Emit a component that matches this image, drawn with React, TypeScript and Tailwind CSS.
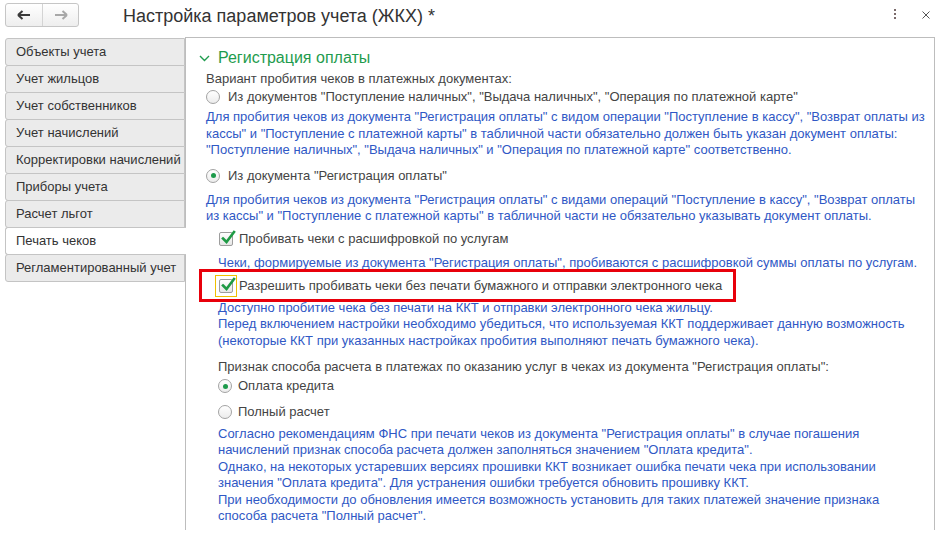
import React from 'react';

const tabs = [
  'Объекты учета',
  'Учет жильцов',
  'Учет собственников',
  'Учет начислений',
  'Корректировки начислений',
  'Приборы учета',
  'Расчет льгот',
  'Печать чеков',
  'Регламентированный учет',
];

const Radio: React.FC<{ checked?: boolean }> = ({ checked }) => (
  <span className="w-[14px] h-[14px] rounded-full border border-[#a3a3a3] bg-gradient-to-b from-white to-[#ececec] flex items-center justify-center shrink-0">
    {checked && <span className="w-[5px] h-[5px] rounded-full bg-[#1c9a4a]" />}
  </span>
);

const Check: React.FC<{ focused?: boolean }> = ({ focused }) => (
  <span
    className={
      focused
        ? 'w-[22px] h-[22px] border border-[#f0c000] flex items-center justify-center shrink-0 -ml-[4px] -mr-[4px]'
        : 'w-[14px] h-[14px] flex items-center justify-center shrink-0'
    }
  >
    <span className="relative w-[14px] h-[14px] border border-[#9d9d9d] rounded-[2px] bg-gradient-to-b from-white to-[#e6e6e6]">
      <svg className="absolute left-[1px] -top-[3px]" width="15" height="15" viewBox="0 0 15 15">
        <path d="M2 8.5 L5.5 12 L13 2" fill="none" stroke="#1f9a45" strokeWidth="2.6" strokeLinecap="square" />
      </svg>
    </span>
  </span>
);

const Blue: React.FC<{ lines: string[]; className?: string }> = ({ lines, className }) => (
  <div className={`text-[#2f58c5] whitespace-nowrap ${className ?? ''}`}>
    {lines.map((l) => (
      <div key={l}>{l}</div>
    ))}
  </div>
);

export default function App() {
  return (
    <div
      className="w-[939px] h-[534px] bg-white overflow-hidden text-[13px] text-[#444]"
      style={{ fontFamily: '"Liberation Sans", Arial, sans-serif' }}
    >
      {/* Header */}
      <div className="h-[37px] flex items-start">
        <div className="ml-[5px] mt-[3px] w-[74px] h-[24px] flex border border-[#c6c6c6] rounded-[3px] bg-gradient-to-b from-white to-[#eeeeee]">
          <div className="w-[37px] flex items-center justify-center border-r border-[#d4d4d4]">
            <svg width="14" height="10" viewBox="0 0 14 10">
              <path d="M1 5 H13 M1 5 L5.5 1 M1 5 L5.5 9" stroke="#3a3a3a" strokeWidth="2" fill="none" />
            </svg>
          </div>
          <div className="flex-1 flex items-center justify-center">
            <svg width="14" height="10" viewBox="0 0 14 10">
              <path d="M13 5 H1 M13 5 L8.5 1 M13 5 L8.5 9" stroke="#a8a8a8" strokeWidth="2" fill="none" />
            </svg>
          </div>
        </div>
        <div className="ml-[44px] mt-[4px] text-[18px] leading-[24px] text-[#333]">
          Настройка параметров учета (ЖКХ) *
        </div>
        <div className="ml-auto mt-[8px] flex items-start">
          <div className="flex flex-col gap-[2px] mt-[1px]">
            <span className="w-[2px] h-[2px] bg-[#7a6a6a]" />
            <span className="w-[2px] h-[2px] bg-[#7a6a6a]" />
            <span className="w-[2px] h-[2px] bg-[#7a6a6a]" />
          </div>
          <svg className="ml-[26px] mr-[9px] mt-[3px]" width="8" height="8" viewBox="0 0 8 8">
            <path d="M0.5 0.5 L7.5 7.5 M7.5 0.5 L0.5 7.5" stroke="#555" strokeWidth="1" />
          </svg>
        </div>
      </div>

      {/* Body */}
      <div className="flex">
        <div className="ml-[5px] w-[180px] pt-[1px] flex flex-col">
          {tabs.map((t, i) => {
            const active = t === 'Печать чеков';
            return (
              <div
                key={t}
                className={
                  active
                    ? 'relative z-10 w-[181px] h-[28px] pl-[10px] flex items-center bg-white border border-r-0 border-[#c4c4c4] rounded-l-[3px] -mt-px text-[#333]'
                    : `w-[180px] h-[28px] pl-[10px] flex items-center bg-[#ebebeb] border border-[#c4c4c4] rounded-l-[3px] text-[#333] ${i === 0 ? '' : '-mt-px'}`
                }
              >
                {t}
              </div>
            );
          })}
        </div>

        <div className="relative w-[750px] h-[493px] border-t border-l border-r border-[#bdbdbd] pl-[20px] pt-[9px]">
          {/* Section header */}
          <div className="h-[22px] flex items-center -ml-[7px]">
            <svg width="11" height="7" viewBox="0 0 11 7">
              <path d="M1 1 L5.5 5.5 L10 1" fill="none" stroke="#1f9c4e" strokeWidth="1.4" />
            </svg>
            <span className="ml-[8px] text-[16px] leading-[22px] text-[#1f9c4e]">Регистрация оплаты</span>
          </div>

          <div className="mt-[2px] h-[16px] leading-[16px]">Вариант пробития чеков в платежных документах:</div>

          <div className="mt-[1px] h-[18px] flex items-center gap-[8px]">
            <Radio />
            <span>Из документов "Поступление наличных", "Выдача наличных", "Операция по платежной карте"</span>
          </div>

          <Blue
            className="mt-[3px] leading-[16.5px]"
            lines={[
              'Для пробития чеков из документа "Регистрация оплаты" с видом операции "Поступление в кассу", "Возврат оплаты из',
              'кассы" и "Поступление с платежной карты" в табличной части обязательно должен быть указан документ оплаты:',
              '"Поступление наличных", "Выдача наличных" и "Операция по платежной карте" соответственно.',
            ]}
          />

          <div className="mt-[8px] h-[18px] flex items-center gap-[8px]">
            <Radio checked />
            <span>Из документа "Регистрация оплаты"</span>
          </div>

          <Blue
            className="mt-[7px] leading-[16px]"
            lines={[
              'Для пробития чеков из документа "Регистрация оплаты" с видами операций "Поступление в кассу", "Возврат оплаты',
              'из кассы" и "Поступление с платежной карты" в табличной части не обязательно указывать документ оплаты.',
            ]}
          />

          <div className="pl-[12px]">
            <div className="mt-[6px] h-[18px] flex items-center gap-[6px] pl-[1px]">
              <Check />
              <span>Пробивать чеки с расшифровкой по услугам</span>
            </div>

            <Blue
              className="mt-[7px] leading-[16px]"
              lines={['Чеки, формируемые из документа "Регистрация оплаты", пробиваются с расшифровкой суммы оплаты по услугам.']}
            />

            <div className="mt-[4px] h-[22px] flex items-center gap-[6px] pl-[1px]">
              <Check focused />
              <span>Разрешить пробивать чеки без печати бумажного и отправки электронного чека</span>
            </div>

            <Blue
              className="mt-[3px] leading-[16.5px]"
              lines={[
                'Доступно пробитие чека без печати на ККТ и отправки электронного чека жильцу.',
                'Перед включением настройки необходимо убедиться, что используемая ККТ поддерживает данную возможность',
                '(некоторые ККТ при указанных настройках пробития выполняют печать бумажного чека).',
              ]}
            />

            <div className="mt-[10px] h-[16px] leading-[16px]">
              Признак способа расчета в платежах по оказанию услуг в чеках из документа "Регистрация оплаты":
            </div>

            <div className="mt-[2px] h-[18px] flex items-center gap-[6px]">
              <Radio checked />
              <span>Оплата кредита</span>
            </div>
            <div className="mt-[8px] h-[18px] flex items-center gap-[6px]">
              <Radio />
              <span>Полный расчет</span>
            </div>

            <Blue
              className="mt-[5px] leading-[16.4px]"
              lines={[
                'Согласно рекомендациям ФНС при печати чеков из документа "Регистрация оплаты" в случае погашения',
                'начислений признак способа расчета должен заполняться значением "Оплата кредита".',
                'Однако, на некоторых устаревших версиях прошивки ККТ возникает ошибка печати чека при использовании',
                'значения "Оплата кредита". Для устранения ошибки требуется обновить прошивку ККТ.',
                'При необходимости до обновления имеется возможность установить для таких платежей значение признака',
                'способа расчета "Полный расчет".',
              ]}
            />
          </div>

          {/* annotation frame */}
          <div className="absolute left-[13px] top-[231px] w-[537px] h-[33px] border-[3px] border-[#e8000b] pointer-events-none" />
        </div>
      </div>
    </div>
  );
}
